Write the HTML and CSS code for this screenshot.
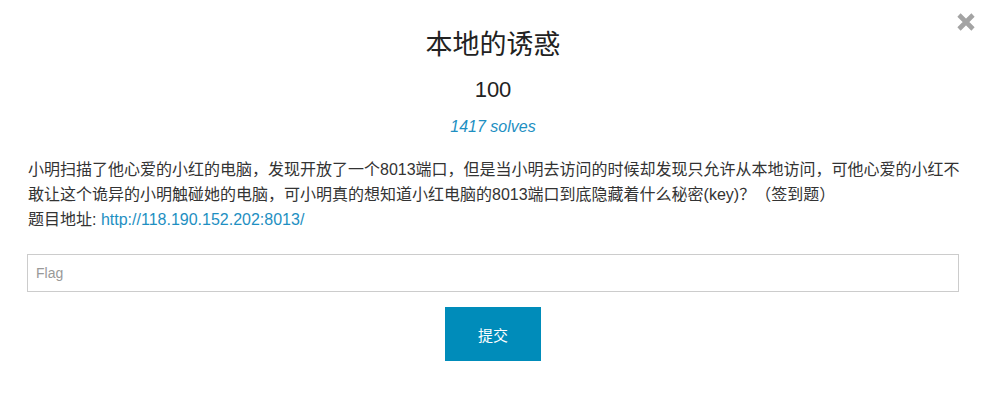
FILE: index.html
```html
<!DOCTYPE html>
<html lang="zh-CN">
<head>
  <meta charset="UTF-8">
  <meta name="viewport" content="width=device-width, initial-scale=1.0">
  <title>本地的诱惑</title>
  <link rel="stylesheet" href="styles.css">
</head>
<body>
  <div class="modal">
    <button class="close" type="button" aria-label="关闭">
      <svg width="20" height="20" viewBox="0 0 20 20">
        <path d="M3 3 L17 17 M17 3 L3 17" stroke="#a3a3a3" stroke-width="4.6" stroke-linecap="butt"/>
      </svg>
    </button>

    <h2 class="chal-name">本地的诱惑</h2>
    <h3 class="chal-value">100</h3>
    <p class="chal-solves">1417 solves</p>

    <p class="chal-desc">小明扫描了他心爱的小红的电脑，发现开放了一个8013端口，但是当小明去访问的时候却发现只允许从本地访问，可他心爱的小红不敢让这个诡异的小明触碰她的电脑，可小明真的想知道小红电脑的8013端口到底隐藏着什么秘密(key)？（签到题）<br>题目地址: <a href="#">http://118.190.152.202:8013/</a></p>

    <form class="flag-form">
      <input type="text" class="flag-input" placeholder="Flag">
      <button type="submit" class="submit-btn">提交</button>
    </form>
  </div>
</body>
</html>
```

FILE: styles.css
```css
body {
  margin: 0;
  background: #fff;
  font-family: "Liberation Sans", "Noto Sans CJK SC", sans-serif;
  color: #333;
}
.modal {
  position: relative;
  padding: 30px 28px 40px 27px;
}
.close {
  position: absolute;
  top: 12px;
  right: 11px;
  padding: 0;
  border: none;
  background: none;
  line-height: 0;
  cursor: pointer;
}
.chal-name {
  margin: 0;
  text-align: center;
  font-size: 27px;
  font-weight: normal;
  line-height: 30px;
  color: #222;
}
.chal-value {
  margin: 15px 0 0;
  text-align: center;
  font-size: 22px;
  font-weight: normal;
  line-height: 30px;
  color: #222;
}
.chal-solves {
  margin: 12px 0 0;
  text-align: center;
  font-size: 16px;
  font-style: italic;
  line-height: 20px;
  color: #1e8fc2;
}
.chal-desc {
  margin: 20px -2px 0 1px;
  font-size: 16px;
  line-height: 25px;
}
.chal-desc a {
  color: #1e8fc2;
  text-decoration: none;
}
.flag-form {
  display: flex;
  flex-direction: column;
  align-items: center;
  margin-top: 22px;
}
.flag-input {
  box-sizing: border-box;
  width: 100%;
  height: 38px;
  padding: 0 8px;
  border: 1px solid #ccc;
  font-family: inherit;
  font-size: 14px;
  color: #333;
}
.flag-input::placeholder {
  color: #999;
}
.submit-btn {
  margin-top: 15px;
  width: 96px;
  height: 54px;
  border: none;
  background: #008cba;
  color: #fff;
  font-family: inherit;
  font-size: 15px;
  cursor: pointer;
}
```
